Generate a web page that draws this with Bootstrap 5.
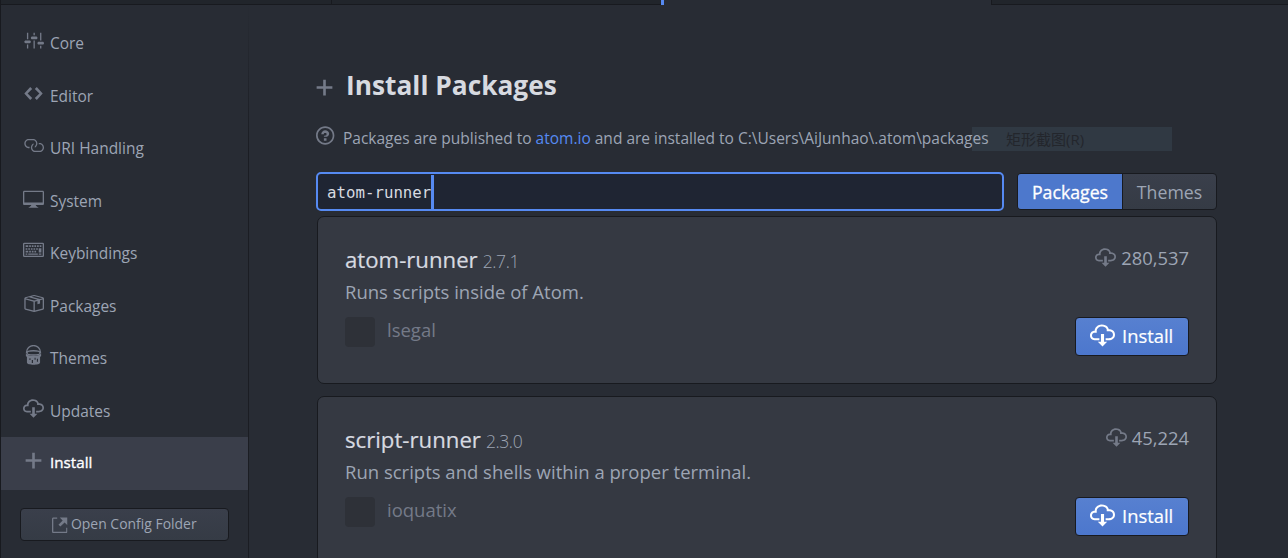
<!DOCTYPE html>
<html lang="en">
<head>
<meta charset="utf-8">
<title>Settings</title>
<link href="https://cdn.jsdelivr.net/npm/bootstrap@5.3.0/dist/css/bootstrap.min.css" rel="stylesheet">
<style>
:root{--edge:#181a1f;--txt:#9da5b4;--dim:#747a88;--hi:#d7dae0}
body{height:558px;background:#282c34;color:var(--txt);font-family:"Open Sans","Noto Sans CJK SC",sans-serif;font-size:15.48px;line-height:20px;border-left:1px solid var(--edge)}
svg{display:block;fill:currentColor;flex:none}
.tabs-strip{height:5px}
.tab-off{background:#21252b;border-bottom:1px solid var(--edge)}
.tab-on{border-left:3px solid #568af2;border-right:1px solid var(--edge);box-sizing:content-box;width:327px}
.side{width:248px;padding-top:12px;border-right:1px solid;border-image:linear-gradient(#282c34,#1b1d23 150px) 1}
.side-item{height:52.5px;padding:13.4px 0 0 22px;color:var(--txt)}
.side-item svg,.ico{width:21px;height:21px;color:var(--dim)}
.side-item span{margin:2.7px 0 0 6px}
.side-item.on{background:#3a3e4a;color:#fff}
.side-item.on span{-webkit-text-stroke:.35px #fff;font-size:15.2px;margin-top:2px}
.cfg{width:209px;height:33px;margin:18px 0 0 19px;border:1px solid var(--edge);border-radius:4px;background:linear-gradient(#3a3f4b,#353b45);font-size:13.95px;line-height:29px;padding-left:31px}
.cfg svg{width:15.5px;height:20.6px;margin-top:6px;color:var(--dim)}
.pane{padding-left:68px}
.inner{width:900px}
h1{font-size:26.3px;line-height:36px;font-weight:700;color:var(--hi);margin:0 0 0 13px}
.info{height:24px;margin-top:30px;font-size:15.5px}
.info a{color:#568af2;text-decoration:none}
.ghost{left:972px;top:127px;width:200px;height:24px;background:#303943;color:#23262c;padding-left:34px;font-size:15px;line-height:25px;z-index:0}
.front{position:relative;z-index:1}
.field{width:688px;height:39px;margin-left:-1px;border:2px solid #568af2;border-radius:5px;background:#1f2533;color:var(--hi);font:15.75px/37px "DejaVu Sans Mono",monospace;padding-left:9px}
.caret{width:3px;height:34px;background:#568af2;margin-top:1px}
.seg{width:200px;height:37px;margin-left:13px;margin-top:1px;border:1px solid var(--edge);border-radius:4px;font-size:17.7px;line-height:37px;background:linear-gradient(#3a3f4b,#353b45);overflow:hidden}
.seg-on{width:105px;background:#4d78cc;color:#fff;border-right:1px solid var(--edge);-webkit-text-stroke:.3px #fff}
.pkg{height:168px;border:1px solid var(--edge);border-radius:7px;background:#353942;padding:26px 27px 0;margin-bottom:12px}
.name{font-size:22.2px;line-height:34px;color:var(--hi);-webkit-text-stroke:.2px var(--hi)}
.ver{font-size:17.5px;font-weight:300;margin-left:5px;letter-spacing:-.4px;color:var(--txt);-webkit-text-stroke:0}
.desc{font-size:18.5px;line-height:26px;margin-top:1px}
.ava{width:30px;height:30px;border-radius:4px;background:#2e3138}
.who{font-size:18.5px;line-height:26px;color:var(--dim);margin-left:12px}
.cnt{font-size:18.4px;line-height:31px;margin-top:-1px}
.cnt svg{margin:5px 5px 0 0}
.go{width:114px;height:39px;margin-top:44px;border:1px solid var(--edge);border-radius:4px;background:linear-gradient(#5780d0,#4c77cd);color:#fff;font-size:18.4px;line-height:35px;padding-left:14px;-webkit-text-stroke:.2px #fff}
.go svg{width:25px;height:25px;margin:5px 7px 0 0}
</style>
</head>
<body class="overflow-hidden d-flex flex-column">
<svg width="0" height="0" class="position-absolute">
<symbol id="set" viewBox="0 0 16 16"><path d="M4 7H3V2h1v5zm-1 7h1v-3H3v3zm5 0h1V8H8v6zm5 0h1v-2h-1v2zm1-12h-1v6h1V2zM9 2H8v2h1V2zM5 8H2c-.55 0-1 .45-1 1s.45 1 1 1h3c.55 0 1-.45 1-1s-.45-1-1-1zm5-3H7c-.55 0-1 .45-1 1s.45 1 1 1h3c.55 0 1-.45 1-1s-.45-1-1-1zm5 4h-3c-.55 0-1 .45-1 1s.45 1 1 1h3c.55 0 1-.45 1-1s-.45-1-1-1z"/></symbol>
<symbol id="code" viewBox="-1 0 16 16"><path d="M9.5 3L8 4.5 11.5 8 8 11.5 9.5 13 14 8 9.5 3zm-5 0L0 8l4.5 5L6 11.5 2.5 8 6 4.5 4.5 3z"/></symbol>
<symbol id="chain" viewBox="0 0 16 16"><path d="M4 9h1v1H4c-1.5 0-3-1.69-3-3.5S2.55 3 4 3h4c1.45 0 3 1.69 3 3.5 0 1.41-.91 2.72-2 3.25V8.59c.58-.45 1-1.27 1-2.09C10 5.22 8.98 4 8 4H4c-.98 0-2 1.22-2 2.5S3 9 4 9zm9-3h-1v1h1c1 0 2 1.22 2 2.5S13.98 12 13 12H9c-.98 0-2-1.22-2-2.5 0-.83.42-1.64 1-2.09V6.25c-1.09.53-2 1.84-2 3.25C6 11.31 7.55 13 9 13h4c1.45 0 3-1.69 3-3.5S14.5 6 13 6z"/></symbol>
<symbol id="desk" viewBox="0 0 16 16"><path d="M15 2H1c-.55 0-1 .45-1 1v9c0 .55.45 1 1 1h5.34c-.25.61-.86 1.39-2.34 2h8c-1.48-.61-2.09-1.39-2.34-2H15c.55 0 1-.45 1-1V3c0-.55-.45-1-1-1zm0 9H1V3h14v8z"/></symbol>
<symbol id="keys" viewBox="0 0 16 16"><path fill-rule="evenodd" d="M1 2h14q1 0 1 1v9q0 1-1 1H1q-1 0-1-1V3q0-1 1-1zm0 1v9h14V3z"/><path d="M2 4h2v1.300H2zm2.700 0h1.300v1.300H4.700zm2 0H8v1.300H6.700zm2 0H10v1.300H8.700zm2 0H12v1.300h-1.300zm2 0H14v1.300h-1.300zM2 6.200h1.300v1.300H2zm2 0h1.300v1.300H4zm2 0h1.300v1.300H6zm2 0h1.300v1.300H8zm2 0h1.300v1.300H10zM2 8.200h2v1.300H2zm2.700 0H6v1.300H4.700zm2 0H8v1.300H6.700zm2 0H10v1.300H8.700zm3.300-2h2v3.300h-2zM2 10.200h1.300v1H2zm2 0h7.300v1H4zm8 0h2v1h-2z"/></symbol>
<symbol id="box" viewBox="0 0 16 16"><path d="M1 4.27v7.47c0 .45.3.84.75.97l6.5 1.73c.16.05.34.05.5 0l6.5-1.73c.45-.13.75-.52.75-.97V4.27c0-.45-.3-.84-.75-.97l-6.5-1.74a1.4 1.4 0 0 0-.5 0L1.75 3.3c-.45.13-.75.52-.75.97zm7 9.09l-6-1.59V5l6 1.61v6.75zM2 4l2.5-.67L11 5.06l-2.5.67L2 4zm13 7.77l-6 1.59V6.61l2-.55V8.5l2-.53V5.53L15 5v6.77zm-2-7.24L6.5 2.8l2-.53L15 4l-2 .53z"/></symbol>
<symbol id="can" viewBox="0 0 16 16"><g fill="none" stroke="currentColor"><path d="M2.700 6V5.500a5.300 5.100 0 0 1 10.600 0V6"/><ellipse cx="8" cy="6" rx="5" ry="1.600"/></g><path d="M2.200 6C3 9 13 9 13.800 6v2.500l-.8.500v4.300c0 2.300-10 2.300-10 0V9l-.8-.5z"/><path fill="#282c34" d="M4.900 10h.8v1.500h-.8zM6.700 11.500h.9v2.200h-.9zM8.800 9.800h.8v1.400h-.8zM10.600 10.500h.8v2.200h-.8z"/></symbol>
<symbol id="cloud" viewBox="0 0 16 16"><path d="M9 12h2l-3 3-3-3h2V7h2v5zm3-8c0-.44-.91-3-4.500-3C5.080 1 3 2.920 3 5 1.020 5 0 6.520 0 8c0 1.530 1 3 3 3h3V9.700H3C1.380 9.700 1.300 8.280 1.300 8c0-.17.05-1.700 1.700-1.700h1.300V5c0-1.390 1.560-2.700 3.200-2.700 2.550 0 3.130 1.550 3.200 1.800v1.200H12c.81 0 2.700.22 2.700 2.200 0 2.090-2.250 2.200-2.700 2.200h-2V11h2c2.080 0 4-1.160 4-3.500C16 5.060 14.080 4 12 4z"/></symbol>
<symbol id="plus" viewBox="-2 0 16 16"><path d="M12 9H7v5H5V9H0V7h5V2h2v5h5v2z"/></symbol>
<symbol id="ask" viewBox="0 0 16 16"><path d="M6 10h2v2H6v-2zm4-3.500C10 8.640 8 9 8 9H6c0-.55.45-1 1-1h.5c.28 0 .5-.22.5-.5v-1c0-.28-.22-.5-.5-.5h-1c-.28 0-.5.22-.5.5V7H4c0-1.500 1.500-3 3-3s3 1 3 2.500zM7 2.300c3.140 0 5.700 2.560 5.700 5.700s-2.560 5.700-5.700 5.700A5.710 5.710 0 0 1 1.300 8c0-3.140 2.560-5.700 5.700-5.700zM7 1C3.140 1 0 4.140 0 8s3.140 7 7 7 7-3.140 7-7-3.140-7-7-7z"/></symbol>
<symbol id="ext" viewBox="0 0 12 16"><path d="M11 10h1v3c0 .55-.45 1-1 1H1c-.55 0-1-.45-1-1V3c0-.55.45-1 1-1h3v1H1v10h10v-3zM6 2l2.250 2.250L5 7.500 6.500 9l3.250-3.250L12 8V2H6z"/></symbol>
</svg>
<div class="tabs-strip d-flex flex-shrink-0">
  <div class="tab-off" style="width:331px;border-right:1px solid #181a1f"></div><div class="tab-off" style="width:329px"></div>
  <div class="tab-on"></div><div class="tab-off flex-grow-1"></div>
</div>
<div class="d-flex flex-grow-1">
  <nav class="side flex-shrink-0">
    <div class="side-item d-flex align-items-start"><svg><use href="#set"/></svg><span>Core</span></div>
    <div class="side-item d-flex align-items-start"><svg><use href="#code"/></svg><span>Editor</span></div>
    <div class="side-item d-flex align-items-start"><svg><use href="#chain"/></svg><span>URI Handling</span></div>
    <div class="side-item d-flex align-items-start"><svg><use href="#desk"/></svg><span>System</span></div>
    <div class="side-item d-flex align-items-start"><svg><use href="#keys"/></svg><span>Keybindings</span></div>
    <div class="side-item d-flex align-items-start"><svg><use href="#box"/></svg><span>Packages</span></div>
    <div class="side-item d-flex align-items-start"><svg><use href="#can"/></svg><span>Themes</span></div>
    <div class="side-item d-flex align-items-start"><svg><use href="#cloud"/></svg><span>Updates</span></div>
    <div class="side-item on d-flex align-items-start"><svg><use href="#plus"/></svg><span>Install</span></div>
    <div class="cfg d-flex"><svg><use href="#ext"/></svg><span style="margin-left:3.5px">Open Config Folder</span></div>
  </nav>
  <main class="pane">
    <div class="inner">
      <div class="d-flex" style="padding-top:62px"><svg class="ico" style="margin:10px -2px 0 -3px"><use href="#plus"/></svg><h1>Install Packages</h1></div>
      <div class="info d-flex front"><svg class="ico" style="margin:-8px 0 0 -1px"><use href="#ask"/></svg><span class="text-nowrap" style="margin:-5.5px 0 0 6px">Packages are published to <a href="#">atom.io</a> and are installed to C:\Users\AiJunhao\.atom\packages</span></div>
      <div class="d-flex" style="margin-top:15px;height:44px">
        <div class="field d-flex"><span>atom-runner</span><div class="caret"></div></div>
        <div class="seg d-flex text-center"><div class="seg-on">Packages</div><div class="flex-grow-1">Themes</div></div>
      </div>
      <div class="pkg d-flex justify-content-between">
        <div><div class="name">atom-runner<span class="ver">2.7.1</span></div><div class="desc">Runs scripts inside of Atom.</div>
        <div class="d-flex" style="margin-top:12px"><div class="ava"></div><div class="who">lsegal</div></div></div>
        <div class="d-flex flex-column align-items-end"><div class="cnt d-flex"><svg class="ico"><use href="#cloud"/></svg>280,537</div><div class="go d-flex"><svg><use href="#cloud"/></svg>Install</div></div>
      </div>
      <div class="pkg d-flex justify-content-between">
        <div><div class="name">script-runner<span class="ver">2.3.0</span></div><div class="desc">Run scripts and shells within a proper terminal.</div>
        <div class="d-flex" style="margin-top:12px"><div class="ava"></div><div class="who">ioquatix</div></div></div>
        <div class="d-flex flex-column align-items-end"><div class="cnt d-flex"><svg class="ico"><use href="#cloud"/></svg>45,224</div><div class="go d-flex"><svg><use href="#cloud"/></svg>Install</div></div>
      </div>
    </div>
  </main>
</div>
<div class="ghost position-absolute">矩形截图(R)</div>
<script src="https://cdn.jsdelivr.net/npm/bootstrap@5.3.0/dist/js/bootstrap.bundle.min.js"></script>
</body>
</html>
